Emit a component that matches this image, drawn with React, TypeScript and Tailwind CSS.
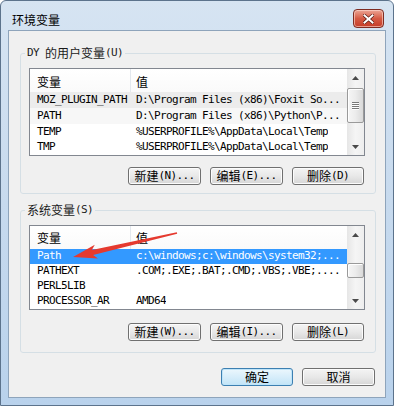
import React from "react";

const CJK = "font-['Noto_Sans_CJK_SC',sans-serif]";
const MONO = "font-['DejaVu_Sans_Mono',monospace]";

function Tri({ up }: { up?: boolean }) {
  return (
    <svg width="7" height="4" viewBox="0 0 7 4">
      <path d={up ? "M3.5 0 L7 4 L0 4Z" : "M0 0 L7 0 L3.5 4Z"} fill="#4a4a4a" />
    </svg>
  );
}

function ScrollBar({ thumbCls, grip }: { thumbCls: string; grip?: boolean }) {
  return (
    <div className="w-[17px] flex flex-col bg-gradient-to-r from-[#e6e6e6] via-[#f5f5f5] to-[#eeeeee]">
      <div className="h-[17px] flex items-center justify-center">
        <Tri up />
      </div>
      <div className="flex-1 flex flex-col">
        <div
          className={`${thumbCls} rounded-[2px] border border-[#9a9a9a] bg-gradient-to-r from-[#f6f6f6] via-[#ececec] to-[#d9d9d9] flex items-center justify-center shadow-[inset_1px_1px_0_#ffffff]`}
        >
          {grip && (
            <svg width="7" height="8" viewBox="0 0 7 8">
              <path d="M0 0.5H7M0 2.5H7M0 4.5H7M0 6.5H7" stroke="#7a7a7a" strokeWidth="1" />
              <path d="M0 1.5H7M0 3.5H7M0 5.5H7M0 7.5H7" stroke="#ffffff" strokeWidth="1" />
            </svg>
          )}
        </div>
      </div>
      <div className="h-[17px] flex items-center justify-center">
        <Tri />
      </div>
    </div>
  );
}

function Row({ name, value, cls = "" }: { name: string; value: string; cls?: string }) {
  return (
    <div className={`h-[16px] flex items-center ${MONO} text-[11px] leading-[14px] tracking-[-0.62px] ${cls}`}>
      <div className="w-[101px] pl-[7px] whitespace-pre overflow-hidden">{name}</div>
      <div className="pl-[5px] whitespace-pre overflow-hidden">{value}</div>
    </div>
  );
}

function Header() {
  return (
    <div className={`h-[24px] flex items-stretch bg-gradient-to-b from-[#ffffff] to-[#fafafa] ${CJK} text-[12px] text-black`}>
      <div className="w-[100px] pl-[7px] pt-[2px] flex items-center">变量</div>
      <div className="w-px bg-[#e3e8ee]" />
      <div className="pl-[5px] pt-[2px] flex items-center">值</div>
    </div>
  );
}

function Btn({ cjk, mono, w, def }: { cjk: string; mono?: string; w: string; def?: boolean }) {
  return (
    <div
      className={`h-[18px] ${w} flex items-center justify-center rounded-[3px] border ${
        def
          ? "border-[#3c7fb1] bg-gradient-to-b from-[#ecf7fd] to-[#c2e4f7] shadow-[inset_0_0_0_1px_#bfe4f9]"
          : "border-[#707070] bg-gradient-to-b from-[#f4f4f4] via-[#e8e8e8] to-[#d6d6d6] shadow-[inset_0_0_0_1px_#fcfcfc]"
      } text-black overflow-hidden`}
    >
      <span className={`${CJK} text-[12px] leading-[14px]`}>{cjk}</span>
      {mono && (
        <span className={`${MONO} text-[11px] leading-[14px] tracking-[-0.62px]`}>{mono}</span>
      )}
    </div>
  );
}

function Group({
  label,
  children,
  cls,
}: {
  label: React.ReactNode;
  children: React.ReactNode;
  cls: string;
}) {
  return (
    <fieldset className={`ml-[11px] w-[356px] border border-[#d5dfe5] rounded-[3px] pl-[8px] pr-[10px] ${cls}`}>
      <legend className="ml-[-4px] px-[2px] h-[14px] leading-[14px] flex items-center text-[#1a1a1a]">
        {label}
      </legend>
      {children}
    </fieldset>
  );
}

export default function App() {
  return (
    <div className="relative w-[394px] h-[406px] overflow-hidden rounded-t-[6px] border border-[#5c738c] bg-gradient-to-b from-[#d6e4f2] via-[#c7daee] to-[#b9d2ec] flex flex-col">
      {/* title bar */}
      <div className="h-[29px] flex items-start justify-between pl-[11px] pr-[9px]">
        <span className={`${CJK} text-[12px] leading-[16px] pt-[11px] text-black`}>环境变量</span>
        <div className="mt-[8px] w-[31px] h-[19px] rounded-[4px] border border-[#7e2c22] bg-gradient-to-b from-[#eba595] via-[#d55a44] to-[#c53b27] flex items-center justify-center shadow-[inset_0_0_0_1px_rgba(255,220,210,0.6)]">
          <svg width="11" height="10" viewBox="0 0 11 10">
            <path d="M1.5 1.5L9.5 8.5M9.5 1.5L1.5 8.5" stroke="#5a1c14" strokeWidth="3.4" strokeLinecap="square" />
            <path d="M1.5 1.5L9.5 8.5M9.5 1.5L1.5 8.5" stroke="#ffffff" strokeWidth="2" strokeLinecap="square" />
          </svg>
        </div>
      </div>

      {/* client area */}
      <div className="mx-[7px] flex-1 border border-[#8ea4bb] bg-[#f0f0f0] flex flex-col">
        <Group
          cls="mt-[15px] pt-[8px] pb-[8px]"
          label={
            <>
              <span className={`${MONO} text-[11px] leading-[14px] tracking-[-0.62px] whitespace-pre`}>{"DY "}</span>
              <span className={`${CJK} text-[12px] leading-[14px]`}>的用户变量</span>
              <span className={`${MONO} text-[11px] leading-[14px] tracking-[-0.62px]`}>(U)</span>
            </>
          }
        >
          <div className="h-[88px] border border-[#828790] bg-white flex overflow-hidden">
            <div className="flex-1 flex flex-col text-black">
              <Header />
              <Row name="MOZ_PLUGIN_PATH" value={"D:\\Program Files (x86)\\Foxit So..."} cls="bg-[#ececec]" />
              <Row name="PATH" value={"D:\\Program Files (x86)\\Python\\P..."} cls="bg-[#f7f7f7]" />
              <Row name="TEMP" value={"%USERPROFILE%\\AppData\\Local\\Temp"} />
              <Row name="TMP" value={"%USERPROFILE%\\AppData\\Local\\Temp"} />
            </div>
            <ScrollBar thumbCls="mt-[2px] h-[35px]" grip />
          </div>
          <div className="mt-[11px] mr-[1px] flex justify-end gap-[9px]">
            <Btn cjk="新建" mono="(N)..." w="w-[73px]" />
            <Btn cjk="编辑" mono="(E)..." w="w-[73px]" />
            <Btn cjk="删除" mono="(D)" w="w-[72px]" />
          </div>
        </Group>

        <Group
          cls="mt-[9px] pt-[8px] pb-[11px]"
          label={
            <>
              <span className={`${CJK} text-[12px] leading-[14px]`}>系统变量</span>
              <span className={`${MONO} text-[11px] leading-[14px] tracking-[-0.62px]`}>(S)</span>
            </>
          }
        >
          <div className="h-[85px] border border-[#828790] bg-white flex overflow-hidden">
            <div className="flex-1 flex flex-col text-black">
              <Header />
              <Row name="Path" value={"c:\\windows;c:\\windows\\system32;..."} cls="bg-[#3399ff] text-white" />
              <Row name="PATHEXT" value=".COM;.EXE;.BAT;.CMD;.VBS;.VBE;...." />
              <Row name="PERL5LIB" value="" />
              <Row name="PROCESSOR_AR" value="AMD64" />
            </div>
            <ScrollBar thumbCls="mt-[20px] h-[15px]" />
          </div>
          <div className="mt-[13px] mr-[1px] flex justify-end gap-[9px]">
            <Btn cjk="新建" mono="(W)..." w="w-[73px]" />
            <Btn cjk="编辑" mono="(I)..." w="w-[73px]" />
            <Btn cjk="删除" mono="(L)" w="w-[72px]" />
          </div>
        </Group>

        <div className="mt-[15px] pr-[10px] flex justify-end gap-[9px]">
          <Btn cjk="确定" w="w-[72px]" def />
          <Btn cjk="取消" w="w-[73px]" />
        </div>
      </div>
      <div className="h-[7px]" />

      {/* red annotation arrow */}
      <svg
        className="absolute left-[-1px] top-[-1px] pointer-events-none"
        width="394"
        height="406"
        viewBox="0 0 394 406"
      >
        <polygon
          points="73,257 94.8,244.8 91.9,250.1 176.8,232.2 177.2,233.8 93.1,254.9 98,258.4"
          fill="#e53a2f"
        />
      </svg>
    </div>
  );
}
